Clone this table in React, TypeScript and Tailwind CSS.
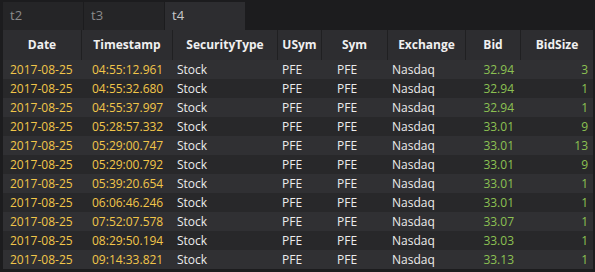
import React from 'react';

const rows = [
  ['04:55:12.961', '32.94', '3'],
  ['04:55:32.680', '32.94', '1'],
  ['04:55:37.997', '32.94', '1'],
  ['05:28:57.332', '33.01', '9'],
  ['05:29:00.747', '33.01', '13'],
  ['05:29:00.792', '33.01', '9'],
  ['05:39:20.654', '33.01', '1'],
  ['06:06:46.246', '33.01', '1'],
  ['07:52:07.578', '33.07', '1'],
  ['08:29:50.194', '33.03', '1'],
  ['09:14:33.821', '33.13', '1'],
];

const headers = ['Date', 'Timestamp', 'SecurityType', 'USym', 'Sym', 'Exchange', 'Bid', 'BidSize'];
const cols = 'grid grid-cols-[79px_91px_105px_44px_66px_78px_55px_72px]';

const App = () => {
  return (
    <div
      className="w-[595px] h-[272px] overflow-hidden bg-[#1c1c1e] pl-[3px] pr-[2px] pt-[2px] text-[12px]"
      style={{ fontFamily: '"Open Sans", sans-serif' }}
    >
      {/* tabs */}
      <div className="flex gap-px h-[28px]">
        <div className="w-[80px] bg-[#252527] text-[#8a8a8c] pl-[7px] pt-[4px] text-[13px]">t2</div>
        <div className="w-[80px] bg-[#252527] text-[#8a8a8c] pl-[7px] pt-[4px] text-[13px]">t3</div>
        <div className="w-[80px] bg-[#2d2d30] text-[#c8c8ca] pl-[7px] pt-[4px] text-[13px]">t4</div>
      </div>

      {/* header */}
      <div className={`${cols} h-[30px] bg-[#2d2d30] text-[#f0f0f0] font-bold`}>
        {headers.map((h, i) => (
          <div
            key={h}
            className={`flex items-center justify-center ${i < headers.length - 1 ? 'border-r border-[#202022]' : ''}`}
          >
            {h}
          </div>
        ))}
      </div>

      {/* rows */}
      {rows.map(([ts, bid, size], i) => (
        <div
          key={i}
          className={`${cols} h-[19px] items-center font-medium ${i % 2 === 0 ? 'bg-[#303033]' : 'bg-[#28282a]'}`}
        >
          <div className="pl-[7px] text-[#f2c649]">2017-08-25</div>
          <div className="pl-[10px] text-[#f2c649]">{ts}</div>
          <div className="pl-[4px] text-[#ececec]">Stock</div>
          <div className="pl-[4px] text-[#ececec]">PFE</div>
          <div className="pl-[15px] text-[#ececec]">PFE</div>
          <div className="pl-[4px] text-[#ececec]">Nasdaq</div>
          <div className="pr-[7px] text-right text-[#8cc152]">{bid}</div>
          <div className="pr-[5px] text-right text-[#8cc152]">{size}</div>
        </div>
      ))}
    </div>
  );
};

export default App;
